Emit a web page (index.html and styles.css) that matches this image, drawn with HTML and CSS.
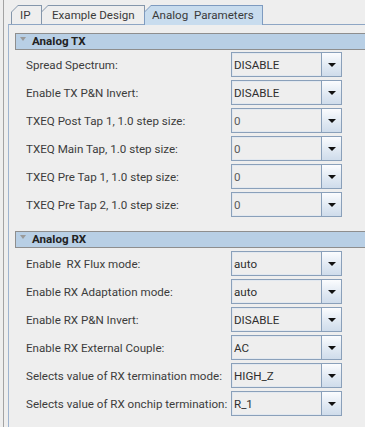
FILE: index.html
```html
<!DOCTYPE html>
<html>
<head>
<meta charset="utf-8">
<link rel="stylesheet" href="styles.css">
</head>
<body>
<div class="window">
  <div class="tabs">
    <div class="tab"><div class="tab-inner">IP</div></div>
    <div class="tab"><div class="tab-inner">Example Design</div></div>
    <div class="tab selected"><div class="tab-inner">Analog&nbsp; Parameters</div></div>
  </div>
  <div class="panel">
    <div class="section">
      <div class="section-head"><span class="caret"></span>Analog TX</div>
      <div class="rows">
        <div class="row"><span class="label">Spread Spectrum:</span><div class="combo"><span class="val">DISABLE</span><span class="btn"><i class="arrow"></i></span></div></div>
        <div class="row"><span class="label">Enable TX P&amp;N Invert:</span><div class="combo"><span class="val">DISABLE</span><span class="btn"><i class="arrow"></i></span></div></div>
        <div class="row"><span class="label">TXEQ Post Tap 1, 1.0 step size:</span><div class="combo"><span class="val num">0</span><span class="btn"><i class="arrow"></i></span></div></div>
        <div class="row"><span class="label">TXEQ Main Tap, 1.0 step size:</span><div class="combo"><span class="val num">0</span><span class="btn"><i class="arrow"></i></span></div></div>
        <div class="row"><span class="label">TXEQ Pre Tap 1, 1.0 step size:</span><div class="combo"><span class="val num">0</span><span class="btn"><i class="arrow"></i></span></div></div>
        <div class="row"><span class="label">TXEQ Pre Tap 2, 1.0 step size:</span><div class="combo"><span class="val num">0</span><span class="btn"><i class="arrow"></i></span></div></div>
      </div>
    </div>
    <div class="section second">
      <div class="section-head"><span class="caret"></span>Analog RX</div>
      <div class="rows">
        <div class="row"><span class="label">Enable&nbsp; RX Flux mode:</span><div class="combo"><span class="val">auto</span><span class="btn"><i class="arrow"></i></span></div></div>
        <div class="row"><span class="label">Enable RX Adaptation mode:</span><div class="combo"><span class="val">auto</span><span class="btn"><i class="arrow"></i></span></div></div>
        <div class="row"><span class="label">Enable RX P&amp;N Invert:</span><div class="combo"><span class="val">DISABLE</span><span class="btn"><i class="arrow"></i></span></div></div>
        <div class="row"><span class="label">Enable RX External Couple:</span><div class="combo"><span class="val">AC</span><span class="btn"><i class="arrow"></i></span></div></div>
        <div class="row"><span class="label">Selects value of RX termination mode:</span><div class="combo"><span class="val">HIGH_Z</span><span class="btn"><i class="arrow"></i></span></div></div>
        <div class="row"><span class="label">Selects value of RX onchip termination:</span><div class="combo"><span class="val">R_1</span><span class="btn"><i class="arrow"></i></span></div></div>
      </div>
    </div>
  </div>
</div>
</body>
</html>
```

FILE: styles.css
```css
html, body {
  margin: 0;
  padding: 0;
  background: #eeeeee;
  width: 365px;
  height: 427px;
  overflow: hidden;
}
body {
  font-family: Roboto, "Noto Sans", sans-serif;
  font-size: 11.6px;
  color: #333333;
}
.window {
  margin-left: 3px;
  border-left: 1px solid #a3a3a3;
  padding-left: 4px;
  height: 427px;
  box-sizing: border-box;
  display: flex;
  flex-direction: column;
}
.tabs {
  display: flex;
  padding-top: 5px;
  padding-left: 3px;
  height: 19px;
  position: relative;
  z-index: 2;
}
.tab {
  background: #8496ab;
  clip-path: polygon(0 7px, 7px 0, 100% 0, 100% 100%, 0 100%);
  padding: 1px 1px 0 1px;
  height: 19px;
  box-sizing: border-box;
  margin-right: -1px;
}
.tab-inner {
  background: #eeeeee;
  clip-path: polygon(0 6px, 6px 0, 100% 0, 100% 100%, 0 100%);
  height: 18px;
  line-height: 18px;
  padding: 0 10px 0 9px;
  white-space: nowrap;
  color: #3a3a3a;
}
.tab:first-child .tab-inner {
  width: 29px;
  box-sizing: border-box;
  padding-left: 8px;
}
.tab:nth-child(2) .tab-inner {
  width: 102px;
  box-sizing: border-box;
  padding-left: 10px;
}
.tab.selected {
  background: #7e9bc0;
  height: 20px;
}
.tab.selected .tab-inner {
  background: #c8dcee;
  height: 19px;
  width: 117px;
  box-sizing: border-box;
  padding-left: 7px;
}
.panel {
  flex: 1;
  border-top: 1px solid #8ea6c4;
  border-left: 1px solid #9fb4cf;
  padding: 8px 0 0 6px;
  display: flex;
  flex-direction: column;
}
.section-head {
  height: 15px;
  border: 1px solid #8e8e8e;
  border-right: none;
  background: #b8cfe5;
  font-weight: bold;
  color: #222222;
  display: flex;
  align-items: center;
  padding-left: 4px;
  line-height: 15px;
}
.caret {
  width: 0;
  height: 0;
  border-left: 3px solid transparent;
  border-right: 3px solid transparent;
  border-top: 4px solid #9a9a9a;
  margin-right: 6px;
  margin-top: -5px;
}
.second {
  margin-top: 14px;
}
.rows {
  display: flex;
  flex-direction: column;
  gap: 3px;
  padding-top: 2px;
  padding-left: 11px;
}
.second .rows {
  padding-top: 3px;
}
.row {
  display: flex;
  align-items: center;
  height: 25px;
}
.label {
  width: 205px;
  white-space: nowrap;
  overflow: hidden;
  color: #3c3c3c;
}
.combo {
  width: 111px;
  height: 25px;
  box-sizing: border-box;
  border: 1px solid #8aa0ba;
  display: flex;
  background: #eeeeee;
}
.val {
  flex: 1;
  padding-left: 1px;
  line-height: 22px;
  border: 1px solid #e2e8ef;
  border-right: none;
  color: #2e2e2e;
}
.val.num {
  color: #5a5a5a;
}
.btn {
  width: 19px;
  border-left: 1px solid #8aa0ba;
  background: linear-gradient(#fbfcfe, #dfe8f2 60%, #cfdceb);
  display: flex;
  align-items: center;
  justify-content: center;
}
.arrow {
  width: 0;
  height: 0;
  border-left: 4px solid transparent;
  border-right: 4px solid transparent;
  border-top: 4px solid #111111;
  margin-top: 1px;
}
```
